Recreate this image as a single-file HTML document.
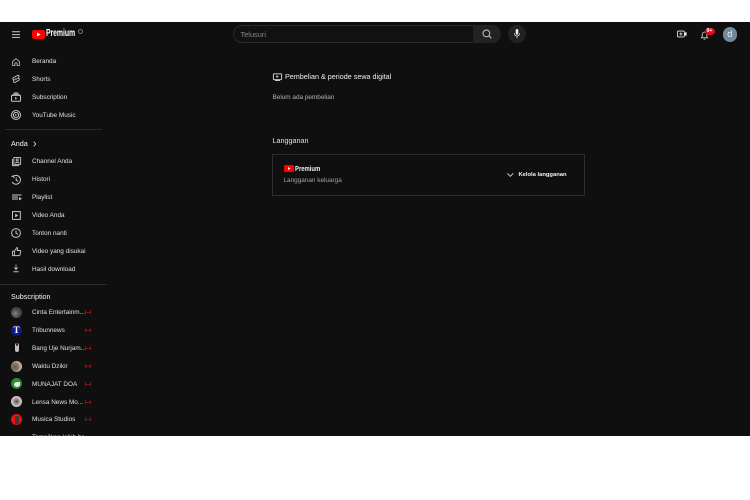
<!DOCTYPE html>
<html><head><meta charset="utf-8">
<style>
html,body{margin:0;padding:0;background:#fff}
body{width:750px;height:500px;position:relative;overflow:hidden;font-family:"Liberation Sans",sans-serif}
#app{position:absolute;left:0;top:21.5px;width:750px;height:414.5px;background:#0f0f0f;overflow:hidden}
#root{position:absolute;left:0;top:-21.5px;width:750px;height:500px;filter:blur(.3px)}
.t{position:absolute;white-space:nowrap;color:#e0e0e0;font-size:6.4px;line-height:10px}
.h{position:absolute;white-space:nowrap;color:#f6f6f6;font-size:7.2px;line-height:10px;font-weight:500}
.hr{position:absolute;height:1px;background:#2a2a2a}
svg{position:absolute;overflow:visible}
.i{fill:none;stroke:#c8c8c8;stroke-width:1}
.av{position:absolute;left:11px;width:11px;height:11px;border-radius:50%}
.live{position:absolute;left:84.5px;width:6.5px;height:4px;border-left:1.5px solid #7a1616;border-right:1.5px solid #7a1616;box-sizing:border-box}
.live:after{content:"";position:absolute;left:0;right:0;top:1.5px;height:1px;background:#7a1616}
</style></head>
<body>
<div id="app"><div id="root">

<!-- top bar -->
<svg style="left:12px;top:30.5px" width="8" height="8" viewBox="0 0 8 8"><path class="i" d="M0 .8H8M0 3.6H8M0 6.4H8" stroke-width=".8"/></svg>
<svg style="left:32px;top:30px" width="13" height="9" viewBox="0 0 14 9" preserveAspectRatio="none"><rect width="14" height="9" rx="2.2" fill="#f00"/><path d="M5.5 2.6 9.3 4.5 5.5 6.4z" fill="#fff"/></svg>
<div class="t" style="left:46px;top:29px;font-size:10px;font-weight:700;color:#fff;transform:scaleX(.69);transform-origin:left;letter-spacing:-.1px">Premium</div>
<div style="position:absolute;left:77.5px;top:28.5px;width:3px;height:3px;border:.6px solid #777;border-radius:50%"></div>

<div style="position:absolute;left:233px;top:25px;width:240px;height:18px;box-sizing:border-box;border:1px solid #2a2a2a;border-right:0;border-radius:9px 0 0 9px;background:#111"></div>
<div style="position:absolute;left:473px;top:25px;width:28px;height:18px;background:#222;border-radius:0 9px 9px 0"></div>
<div class="t" style="left:240.5px;top:29.5px;color:#888;font-size:7.4px">Telusuri</div>
<svg style="left:482px;top:29px" width="10" height="10" viewBox="0 0 10 10"><circle class="i" cx="4.4" cy="4.4" r="3.4" stroke-width=".8"/><path class="i" stroke-width=".8" d="M6.9 6.9 9.4 9.4"/></svg>
<div style="position:absolute;left:508px;top:25px;width:18px;height:18px;border-radius:50%;background:#222"></div>
<svg style="left:514px;top:29px" width="6" height="10" viewBox="0 0 6 10"><rect x="1.7" y="0" width="2.6" height="5.6" rx="1.3" fill="#eee"/><path d="M.5 4.2C.5 6 1.6 6.9 3 6.9S5.5 6 5.5 4.2M3 6.9V9.2" fill="none" stroke="#eee" stroke-width=".7"/></svg>

<svg style="left:677px;top:30px" width="10" height="8" viewBox="0 0 11 8"><rect x=".5" y=".8" width="7.6" height="6.4" rx=".8" fill="none" stroke="#eee" stroke-width=".9"/><path d="M4.3 2.2V5.8M2.5 4H6.1" stroke="#eee" stroke-width=".9"/><path d="M8.1 3 10.5 1.6V6.4L8.1 5z" fill="#eee"/></svg>
<svg style="left:700px;top:30.5px" width="9" height="9" viewBox="0 0 9 10"><path class="i" stroke-width=".8" d="M1 7.6 2 6.4V4C2 2.4 3 1.2 4.5 1.2S7 2.4 7 4V6.4L8 7.6ZM3.6 8.6C3.8 9.3 5.2 9.3 5.4 8.6"/></svg>
<div style="position:absolute;left:704.5px;top:28px;width:10px;height:7px;border-radius:4px;background:#d90f1c;color:#fff;font-size:5.2px;line-height:7px;text-align:center;font-weight:700">9+</div>
<div style="position:absolute;left:722.5px;top:27.3px;width:14.5px;height:14.5px;border-radius:50%;background:#6f8a9b;color:#f3f6f8;font-size:9px;line-height:14px;text-align:center">d</div>

<!-- sidebar -->
<svg style="left:12.2px;top:57.6px" width="8" height="8.2" viewBox="0 0 10 10"><path class="i" stroke-width=".9" d="M5 .8 .8 4.2V9.3H3.7V6H6.3V9.3H9.2V4.2Z"/></svg>
<div class="t" style="left:32px;top:57px">Beranda</div>
<svg style="left:12.3px;top:74px" width="8.2" height="10" viewBox="0 0 9 10"><path class="i" stroke-width=".8" d="M6.5.9 1.8 3.4C.4 4.2.9 6 2.4 5.9 1 6.9 1.5 9 3 8.9L7.2 6.6C8.6 5.8 8.1 4 6.6 4.1 8 3.1 8.1.5 6.5.9Z"/><path d="M3.8 3.8 5.8 5 3.8 6.2z" fill="#c8c8c8"/></svg>
<div class="t" style="left:32px;top:75px">Shorts</div>
<svg style="left:11.3px;top:91.5px" width="10" height="10" viewBox="0 0 10 10"><rect class="i" stroke-width=".9" x=".5" y="3.4" width="9" height="5.8" rx=".5"/><path class="i" stroke-width=".7" d="M1.6 2.2H8.4M2.8 1H7.2"/><path d="M4.1 5 6.3 6.3 4.1 7.6z" fill="#c8c8c8"/></svg>
<div class="t" style="left:32px;top:93px">Subscription</div>
<svg style="left:11px;top:110px" width="10" height="10" viewBox="0 0 10 10"><circle class="i" stroke-width=".8" cx="5" cy="5" r="4.5"/><circle class="i" stroke-width=".8" cx="5" cy="5" r="2.6"/><path d="M4.2 3.9 6.1 5 4.2 6.1z" fill="#c8c8c8"/></svg>
<div class="t" style="left:32px;top:111px">YouTube Music</div>
<div class="hr" style="left:5px;top:129px;width:97px"></div>

<div class="h" style="left:11px;top:139px;">Anda</div>
<svg style="left:33px;top:141px" width="3.5" height="6" viewBox="0 0 4 6"><path class="i" stroke-width=".8" d="M.8.4 3.2 3 .8 5.6"/></svg>

<svg style="left:11.6px;top:157px" width="9.2" height="9.2" viewBox="0 0 10 10"><rect class="i" stroke-width=".8" x="2" y=".6" width="7.4" height="7.4"/><path class="i" stroke-width=".8" d="M.6 2.2V9.4H7.8"/><circle class="i" stroke-width=".7" cx="5.7" cy="3.2" r="1.2"/><path class="i" stroke-width=".7" d="M3.6 6.8C3.8 5.4 7.6 5.4 7.8 6.8"/></svg>
<div class="t" style="left:32px;top:157px">Channel Anda</div>
<svg style="left:11px;top:175px" width="10" height="10" viewBox="0 0 10 10"><path class="i" stroke-width=".9" d="M2 1.6A4.4 4.4 0 1 1 1.2 7M5.2 2.6V5.2L7 6.3M.5 1.6 2.6.8 3 3"/></svg>
<div class="t" style="left:32px;top:175px">Histori</div>
<svg style="left:11.7px;top:193.3px" width="10" height="9" viewBox="0 0 10 9"><path class="i" stroke-width=".8" d="M0 2H9.5M0 4H6M0 6H6"/><path d="M7 4 10 5.7 7 7.4z" fill="#c8c8c8"/></svg>
<div class="t" style="left:32px;top:193px">Playlist</div>
<svg style="left:12px;top:211px" width="8.8" height="9" viewBox="0 0 9 9"><rect class="i" x=".5" y=".5" width="8" height="8"/><path d="M3.3 2.6 6.3 4.5 3.3 6.4z" fill="#c8c8c8"/></svg>
<div class="t" style="left:32px;top:211px">Video Anda</div>
<svg style="left:11px;top:228px" width="10" height="10" viewBox="0 0 10 10"><circle class="i" stroke-width=".9" cx="5" cy="5" r="4.4"/><path class="i" stroke-width=".9" d="M5 2.4V5.2L6.9 6.3"/></svg>
<div class="t" style="left:32px;top:229px">Tonton nanti</div>
<svg style="left:11.7px;top:246.6px" width="9.2" height="9.2" viewBox="0 0 10 10"><path class="i" stroke-width=".8" d="M.6 4.6H2.6V9.4H.6ZM2.6 4.6 5 1 5.6.6C6.2.8 6.2 1.6 6 2.2L5.6 3.8H9C9.4 3.8 9.6 4.2 9.5 4.6L8.6 8.8C8.5 9.2 8.2 9.4 7.8 9.4H2.6"/></svg>
<div class="t" style="left:32px;top:247px">Video yang disukai</div>
<svg style="left:12.7px;top:264px" width="6" height="8.7" viewBox="0 0 8 9" preserveAspectRatio="none"><path class="i" stroke-width=".8" d="M4 .4V5.6M1.8 3.4 4 5.8 6.2 3.4M.6 8H7.4"/></svg>
<div class="t" style="left:32px;top:265px">Hasil download</div>
<div class="hr" style="left:0;top:283.5px;width:107px"></div>

<div class="h" style="left:11px;top:292px">Subscription</div>

<div class="av" style="top:307px;background:radial-gradient(circle at 40% 60%,#8b8378 0,#4d4a48 45%,#2d3433 100%)"></div>
<div class="t" style="left:32px;top:308px">Cinta Entertainm...</div><div class="live" style="top:310px"></div>

<div class="av" style="top:325px;background:#0d1b8a"></div>
<div style="position:absolute;left:11px;top:325px;width:11px;height:11px;color:#fff;font:700 9px/11px 'Liberation Serif',serif;text-align:center">T</div>
<div class="t" style="left:32px;top:326px">Tribunnews</div><div class="live" style="top:328px"></div>

<div class="av" style="top:343px;background:#0b0b0b"></div>
<div style="position:absolute;left:15px;top:343px;width:3.5px;height:9px;border-radius:2px;background:#c9bdb8"></div>
<div style="position:absolute;left:15.5px;top:343px;width:2.5px;height:3px;border-radius:2px;background:#332024"></div>
<div class="t" style="left:32px;top:344px">Bang Uje Nurjam...</div><div class="live" style="top:346px"></div>

<div class="av" style="top:361px;background:radial-gradient(circle at 35% 55%,#6b5a4c 0,#8a7a6c 40%,#d8d2cb 80%)"></div>
<div class="t" style="left:32px;top:362px">Waktu Dzikir</div><div class="live" style="top:364px"></div>

<div class="av" style="top:378px;background:#2c8a35"></div>
<div style="position:absolute;left:14px;top:382px;width:6px;height:5px;border-radius:50% 10% 50% 50%;background:#e8efe6"></div>
<div class="t" style="left:32px;top:380px">MUNAJAT DOA</div><div class="live" style="top:382px"></div>

<div class="av" style="top:396px;background:radial-gradient(circle,#5a4b4b 0,#bdb5b2 50%,#eee 100%)"></div>
<div class="t" style="left:32px;top:398px">Lensa News Mo...</div><div class="live" style="top:400px"></div>

<div class="av" style="top:414px;background:#ee1111"></div>
<div style="position:absolute;left:14.5px;top:415.5px;width:4px;height:8px;background:#3a3a3a;border-radius:1px"></div>
<div class="t" style="left:32px;top:415px">Musica Studios</div><div class="live" style="top:417px"></div>

<div class="t" style="left:32px;top:433px">Tampilkan lebih ba...</div>

<!-- main -->
<svg style="left:272.5px;top:72.5px" width="9" height="8" viewBox="0 0 9 8"><rect class="i" stroke="#eee" stroke-width=".8" x=".4" y=".9" width="8.2" height="5.7" rx=".4"/><path d="M3.4 2.2 5.6 3.6 3.4 5z" fill="#eee"/><path class="i" stroke-width=".7" d="M2 7.5H7"/></svg>
<div class="t" style="left:285px;top:72px;font-size:7.2px;color:#ededed">Pembelian &amp; periode sewa digital</div>
<div class="t" style="left:272.5px;top:92.5px;color:#b4b4b4;font-size:6.4px">Belum ada pembelian</div>
<div class="t" style="left:272.5px;top:135.5px;font-size:7.2px;color:#e0e0e0">Langganan</div>

<div style="position:absolute;left:272px;top:154px;width:313px;height:42px;box-sizing:border-box;border:1px solid #2d2d2d"></div>
<svg style="left:283.5px;top:165px" width="10" height="7" viewBox="0 0 10 7"><rect width="10" height="7" rx="1.6" fill="#f00"/><path d="M4 2 6.6 3.5 4 5z" fill="#fff"/></svg>
<div class="t" style="left:294.5px;top:164.3px;font-size:7.4px;font-weight:700;color:#eee;transform:scaleX(.8);transform-origin:left">Premium</div>
<div class="t" style="left:283.5px;top:176px;color:#a4a4a4;font-size:6.4px">Langganan keluarga</div>
<svg style="left:507px;top:173px" width="6.6" height="3.8" viewBox="0 0 7 4"><path class="i" stroke-width=".8" d="M.4.4 3.5 3.5 6.6.4"/></svg>
<div class="t" style="left:518.5px;top:170px;font-size:5.8px;font-weight:700;color:#f2f2f2">Kelola langganan</div>

</div></div>
</body></html>
